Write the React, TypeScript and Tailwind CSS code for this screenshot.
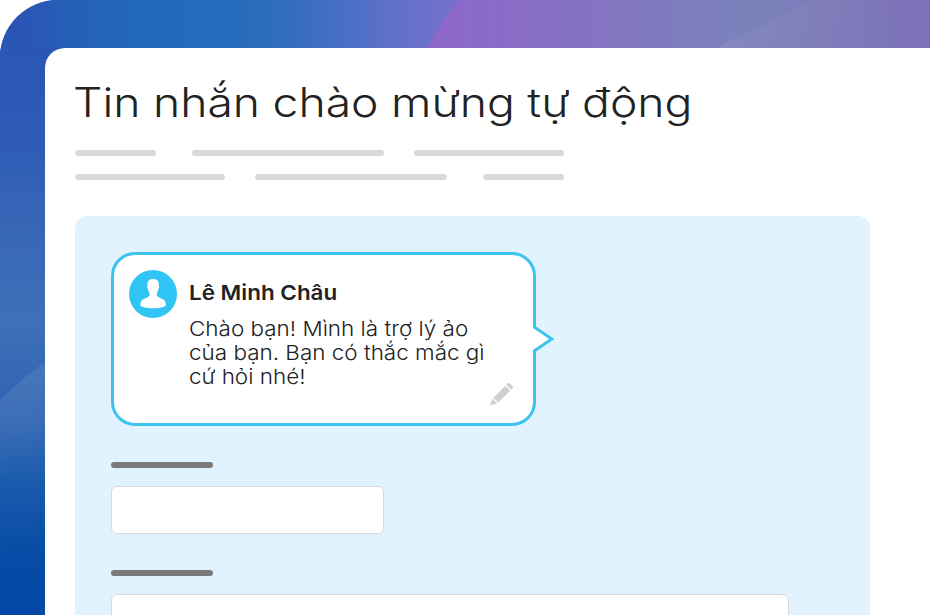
import React from 'react';

const Backdrop = () => (
  <svg className="absolute inset-0" width="930" height="615" viewBox="0 0 930 615" fill="none" aria-hidden="true">
    <defs>
      <linearGradient id="top" x1="0" y1="0" x2="930" y2="0" gradientUnits="userSpaceOnUse">
        <stop offset="0.02" stopColor="#2a55b5" />
        <stop offset="0.11" stopColor="#2465b8" />
        <stop offset="0.22" stopColor="#226cbb" />
        <stop offset="0.28" stopColor="#2a6cbc" />
        <stop offset="0.36" stopColor="#436fc4" />
        <stop offset="0.42" stopColor="#6070c9" />
        <stop offset="0.48" stopColor="#7370cb" />
      </linearGradient>
      <linearGradient id="violet" x1="430" y1="20" x2="930" y2="20" gradientUnits="userSpaceOnUse">
        <stop offset="0" stopColor="#8d68ca" />
        <stop offset="0.2" stopColor="#886dc6" />
        <stop offset="0.38" stopColor="#8276c0" />
        <stop offset="0.62" stopColor="#7a82bb" />
        <stop offset="0.82" stopColor="#7d7ab9" />
        <stop offset="1" stopColor="#7d70b8" />
      </linearGradient>
      <linearGradient id="glow" x1="740" y1="0" x2="880" y2="50" gradientUnits="userSpaceOnUse">
        <stop offset="0" stopColor="#8589bf" />
        <stop offset="1" stopColor="#8379b7" stopOpacity="0" />
      </linearGradient>
      <linearGradient id="side" x1="0" y1="48" x2="0" y2="400" gradientUnits="userSpaceOnUse">
        <stop offset="0" stopColor="#2a56b5" />
        <stop offset="0.25" stopColor="#2d5bb6" />
        <stop offset="0.5" stopColor="#3766b7" />
        <stop offset="0.78" stopColor="#3d70b7" />
        <stop offset="1" stopColor="#3264b4" />
      </linearGradient>
      <linearGradient id="wave" x1="12" y1="375" x2="30" y2="615" gradientUnits="userSpaceOnUse">
        <stop offset="0" stopColor="#4676ba" />
        <stop offset="0.2" stopColor="#3b6db6" />
        <stop offset="0.45" stopColor="#1a5bad" />
        <stop offset="0.75" stopColor="#074ba6" />
        <stop offset="1" stopColor="#0348a6" />
      </linearGradient>
    </defs>
    <rect width="930" height="60" fill="url(#top)" />
    <path d="M458 0H930V60H420L428 48Q440 24 458 0Z" fill="url(#violet)" />
    <path d="M815 0H930V60H690Q760 28 815 0Z" fill="url(#glow)" />
    <rect y="48" width="60" height="567" fill="url(#side)" />
    <path d="M0 400Q24 376 50 359V615H0Z" fill="url(#wave)" />
  </svg>
);

const Placeholder = ({ className }: { className: string }) => (
  <div className={`h-1.5 rounded-full ${className}`} />
);

const Avatar = () => (
  <div className="size-12 shrink-0 rounded-full bg-[#30c5f5]">
    <svg viewBox="0 0 48 48" className="size-12" fill="#fff">
      <path d="M24 9C28.500 9 30.200 11.300 29.800 15.500C30.500 15.700 30.300 18.500 29.400 19C29.100 20.700 28.600 21.700 27.900 22.700V25C28.300 27.500 31.500 27.800 34 29.200C36 30.400 36.900 32.200 36.900 35C36.900 37 31 38.200 24.200 38.200C17.300 38.200 11.300 37 11.300 35C11.300 32.200 12.300 30.400 14.300 29.200C16.800 27.800 20.100 27.500 20.500 25V22.700C19.800 21.700 19.300 20.700 19 19C18.100 18.500 17.900 15.700 18.600 15.500C18.200 11.300 19.700 9 24 9Z" />
    </svg>
  </div>
);

const Pencil = () => (
  <svg width="24" height="24" viewBox="0 0 24 24" fill="#cfcfcf">
    <path d="M17.900 1.200Q18.700 0.400 19.500 1.200L22.900 4.500Q23.600 5.300 22.900 6L21.100 7.800L16.200 2.900Z" />
    <path d="M15.200 3.900L20.100 8.800L8.200 20.600L3.300 15.700Z" />
    <path d="M2.400 16.700L7.200 21.300L0.200 23.400Z" />
  </svg>
);

const MessageBubble = () => (
  <div className="relative h-[174px] w-[425px] rounded-3xl border-[3px] border-[#3cc3ee] bg-white">
    <div className="flex gap-3 pt-[15px] pl-[15px]">
      <Avatar />
      <div className="pt-[11px] text-[#222]">
        <div className="w-max origin-left scale-x-[1.095] text-[20.5px] leading-6 font-semibold">Lê Minh Châu</div>
        <div className="mt-3 w-max origin-left scale-x-[1.095] text-[20.5px] leading-6 font-light">
          <p>Chào bạn! Mình là trợ lý ảo</p>
          <p>của bạn. Bạn có thắc mắc gì</p>
          <p>cứ hỏi nhé!</p>
        </div>
      </div>
    </div>
    <div className="absolute right-[19px] bottom-[17px]">
      <Pencil />
    </div>
    {/* Tail covers the right border of the bubble */}
    <svg className="absolute top-[69px] -right-[22px]" width="22" height="32" viewBox="0 0 22 32">
      <path d="M0 2.300L19 15L0 28Z" fill="#fff" />
      <path d="M1.500 0V3.300L18.700 15L1.500 26.700V32" fill="none" stroke="#3cc3ee" strokeWidth="3" />
    </svg>
  </div>
);

export default function App() {
  return (
    <div className="relative h-[615px] w-[930px] overflow-hidden rounded-tl-[58px] bg-[#2a55b5] pt-12 pl-[45px] font-['Inter','Noto_Sans',sans-serif]">
      <Backdrop />
      <main className="relative h-[567px] overflow-hidden rounded-tl-[20px] bg-white pl-[30px]">
        <h1 className="-ml-0.5 w-max origin-left scale-x-[1.143] pt-7 text-[40.5px] leading-[54px] font-light whitespace-nowrap text-[#222] [word-spacing:-0.5px]">
          Tin nhắn chào mừng tự động
        </h1>

        <div className="mt-5 flex flex-col gap-[18px]">
          <div className="flex">
            <Placeholder className="w-[81px] bg-[#d9d9d9]" />
            <Placeholder className="ml-9 w-48 bg-[#d9d9d9]" />
            <Placeholder className="ml-[30px] w-[150px] bg-[#d9d9d9]" />
          </div>
          <div className="flex">
            <Placeholder className="w-[150px] bg-[#d9d9d9]" />
            <Placeholder className="ml-[30px] w-48 bg-[#d9d9d9]" />
            <Placeholder className="ml-9 w-[81px] bg-[#d9d9d9]" />
          </div>
        </div>

        <section className="mt-9 h-[420px] w-[795px] rounded-t-xl bg-[#e0f3ff] px-9 pt-9">
          <MessageBubble />
          <Placeholder className="mt-9 w-[102px] bg-[#7a7a7a]" />
          <div className="mt-[18px] h-12 w-[273px] rounded-md border border-[#d9d9d9] bg-white" />
          <Placeholder className="mt-9 w-[102px] bg-[#7a7a7a]" />
          <div className="mt-[18px] h-12 w-[678px] rounded-md border border-[#d9d9d9] bg-white" />
        </section>
      </main>
    </div>
  );
}
